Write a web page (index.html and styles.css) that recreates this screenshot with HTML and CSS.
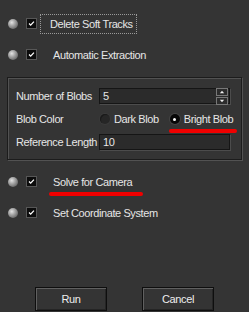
FILE: index.html
```html
<!DOCTYPE html>
<html lang="en">
<head>
  <meta charset="UTF-8">
  <title>Blob Tracking</title>
  <link rel="stylesheet" href="styles.css">
</head>
<body>
  <div class="panel">
    <div class="option">
      <span class="sphere"></span>
      <span class="check"><svg viewBox="0 0 11 11"><path d="M2.5 5.5 L4.5 7.5 L8.5 3.2" /></svg></span>
      <span class="label focused">Delete Soft Tracks</span>
    </div>
    <div class="option">
      <span class="sphere"></span>
      <span class="check"><svg viewBox="0 0 11 11"><path d="M2.5 5.5 L4.5 7.5 L8.5 3.2" /></svg></span>
      <span class="label">Automatic Extraction</span>
    </div>

    <div class="group">
      <div class="field">
        <span class="field-name">Number of Blobs</span>
        <div class="input spin">
          <span class="value">5</span>
          <span class="spinner">
            <span class="spin-btn"><svg viewBox="0 0 7 4"><path d="M3.5 0.5 L6 3.5 L1 3.5 Z" /></svg></span>
            <span class="spin-btn"><svg viewBox="0 0 7 4"><path d="M1 0.5 L6 0.5 L3.5 3.5 Z" /></svg></span>
          </span>
        </div>
      </div>
      <div class="field radios">
        <span class="field-name">Blob Color</span>
        <span class="radio"><span class="dot"></span>Dark Blob</span>
        <span class="radio marked"><span class="dot on"></span>Bright Blob</span>
      </div>
      <div class="field">
        <span class="field-name">Reference Length</span>
        <div class="input"><span class="value">10</span></div>
      </div>
    </div>

    <div class="option solve">
      <span class="sphere"></span>
      <span class="check"><svg viewBox="0 0 11 11"><path d="M2.5 5.5 L4.5 7.5 L8.5 3.2" /></svg></span>
      <span class="label marked">Solve for Camera</span>
    </div>
    <div class="option">
      <span class="sphere"></span>
      <span class="check"><svg viewBox="0 0 11 11"><path d="M2.5 5.5 L4.5 7.5 L8.5 3.2" /></svg></span>
      <span class="label">Set Coordinate System</span>
    </div>

    <div class="actions">
      <button class="btn">Run</button>
      <button class="btn">Cancel</button>
    </div>
  </div>
</body>
</html>
```

FILE: styles.css
```css
body {
  margin: 0;
  background: #343434;
  color: #e6e6e6;
  font-family: "Liberation Sans", Arial, sans-serif;
  font-size: 11px;
  letter-spacing: -0.4px;
}

.panel {
  width: 249px;
  height: 312px;
  padding-top: 8px;
  box-sizing: border-box;
}

.option {
  display: flex;
  align-items: center;
  height: 31px;
  padding-left: 8px;
}

.sphere {
  width: 10px;
  height: 10px;
  border-radius: 50%;
  background: radial-gradient(circle at 38% 35%, #e4e4e4 0, #a8a8a8 35%, #6a6a6a 75%, #4a4a4a 100%);
  flex-shrink: 0;
}

.check {
  width: 11px;
  height: 11px;
  margin-left: 8px;
  background: #0c0c0c;
  border: 1px solid #575757;
  box-sizing: border-box;
  display: flex;
}

.check svg {
  width: 100%;
  height: 100%;
}

.check path {
  fill: none;
  stroke: #fff;
  stroke-width: 1.6;
}

.label {
  margin-left: 13px;
  padding: 3px 2px;
  border: 1px dotted transparent;
  line-height: 12px;
}

.label.focused {
  margin-left: 3px;
  padding: 3px 3px 3px 9px;
  border-color: #9a9a9a;
}

.marked {
  position: relative;
}

.label.marked::after {
  content: "";
  position: absolute;
  left: -2px;
  right: -9px;
  bottom: -5px;
  height: 4px;
  border-radius: 2px;
  background: #f00000;
}

.group {
  margin: 7px 7px 6px 7px;
  padding: 10px 0 9px 8px;
  border: 1px solid #1c1c1c;
  box-shadow: inset 1px 1px 0 #525252, 1px 1px 0 #525252;
}

.field {
  display: flex;
  align-items: center;
  height: 16px;
}

.field.radios {
  height: 18px;
  margin: 6px 0;
}

.field-name {
  width: 83px;
  flex-shrink: 0;
}

.input {
  width: 131px;
  height: 16px;
  box-sizing: border-box;
  background: #2b2b2b;
  border: 1px solid #151515;
  box-shadow: 1px 1px 0 #4c4c4c;
  display: flex;
  align-items: center;
  padding-left: 3px;
}

.input .value {
  flex: 1;
}

.spinner {
  display: flex;
  flex-direction: column;
  gap: 1px;
  margin-right: 1px;
}

.spin-btn {
  width: 10px;
  height: 6px;
  background: #2c2c2c;
  border: 1px solid #777;
  display: flex;
  align-items: center;
  justify-content: center;
}

.spin-btn svg {
  width: 6px;
  height: 4px;
}

.spin-btn path {
  fill: #f0f0f0;
}

.radio {
  display: flex;
  align-items: center;
}

.radio + .radio {
  margin-left: 10px;
}

.dot {
  width: 10px;
  height: 10px;
  border-radius: 50%;
  margin: 0 4px 0 1px;
  background: #262626;
  box-shadow: inset 1px 1px 0 #1a1a1a, 0 0 0 1px #3a3a3a;
  display: flex;
  align-items: center;
  justify-content: center;
}

.dot.on {
  background: #080808;
  box-shadow: 0 0 0 1px #444;
}

.dot.on::before {
  content: "";
  width: 3px;
  height: 3px;
  border-radius: 50%;
  background: #fff;
}

.radio.marked::after {
  content: "";
  position: absolute;
  left: 0;
  right: -4px;
  bottom: -8px;
  height: 4px;
  border-radius: 2px;
  background: #f00000;
}

.actions {
  display: flex;
  justify-content: center;
  gap: 35px;
  margin-top: 59px;
}

.btn {
  width: 72px;
  height: 24px;
  background: #343434;
  color: #eee;
  font-family: inherit;
  font-size: 11px;
  letter-spacing: -0.4px;
  border: 1px solid #0e0e0e;
  box-shadow: inset 1px 1px 0 #606060, inset -1px -1px 0 #252525;
  padding: 0;
}
```
